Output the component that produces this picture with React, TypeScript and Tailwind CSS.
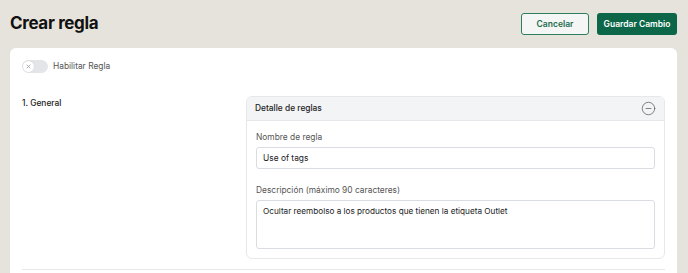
import { MinusCircle } from "lucide-react";

export default function App() {
  return (
    <div className="h-[273px] overflow-hidden bg-[#e6e3dc] px-[10px] pt-[10px] font-['Inter',sans-serif] text-[#1f2328]">
      <div className="flex h-[28px] items-center justify-between pr-px">
        <h1 className="text-[17px] font-bold tracking-[-0.02em] text-[#111]">Crear regla</h1>
        <div className="flex items-center gap-2">
          <button className="h-[22px] w-[68px] rounded-[3px] border border-[#2f7d5d] bg-[#f3f6f4] text-[8.5px] font-semibold text-[#1e6b4b]">
            Cancelar
          </button>
          <button className="h-[22px] w-[80px] rounded-[3px] bg-[#0b6747] text-[8.5px] font-semibold text-white">
            Guardar Cambio
          </button>
        </div>
      </div>

      <div className="mt-[10px] mr-px rounded-md bg-white px-3 pt-3 pb-4">
        <div className="flex h-[13px] items-center gap-[5px]">
          <div className="flex h-[13px] w-[26px] items-center rounded-full bg-[#e4e5e8] px-px">
            <div className="flex h-[11px] w-[11px] items-center justify-center rounded-full bg-white shadow-[0_0_0_0.5px_#d1d5db]">
              <svg viewBox="0 0 10 10" className="h-[5px] w-[5px]" stroke="#9a9ca0" strokeWidth="1.6" strokeLinecap="round">
                <path d="M2 2l6 6M8 2l-6 6" />
              </svg>
            </div>
          </div>
          <span className="text-[8.4px] text-[#555]">Habilitar Regla</span>
        </div>

        <div className="mt-[23px] flex">
          <div className="w-[224px] pt-[1px] text-[8.4px] leading-3 font-medium text-[#222]">1. General</div>
          <div className="flex-1 overflow-hidden rounded-md border border-[#e5e7eb]">
            <div className="flex h-[24px] items-center justify-between border-b border-[#e5e7eb] bg-[#f3f4f6] pl-[8px] pr-[8px]">
              <span className="text-[8.4px] font-medium text-[#222]">Detalle de reglas</span>
              <MinusCircle className="h-[15px] w-[15px] text-[#666]" strokeWidth={1.3} />
            </div>
            <div className="px-[9px] pt-[10px] pb-[9px]">
              <label className="block text-[8.4px] leading-3 text-[#555]">Nombre de regla</label>
              <div className="mt-[4px] flex h-[22px] items-center rounded-[3px] border border-[#d9dce0] px-[6px] text-[8.4px] text-[#222]">
                Use of tags
              </div>
              <label className="mt-[15px] block text-[8.4px] leading-3 text-[#555]">
                Descripción (máximo 90 caracteres)
              </label>
              <div className="mt-[4px] h-[49px] rounded-[3px] border border-[#d9dce0] px-[6px] pt-[4px] text-[8.2px] leading-3 text-[#222]">
                Ocultar reembolso a los productos que tienen la etiqueta Outlet
              </div>
            </div>
          </div>
        </div>

        <div className="mt-[10px] h-px bg-[#e5e7eb]" />
      </div>
    </div>
  );
}
